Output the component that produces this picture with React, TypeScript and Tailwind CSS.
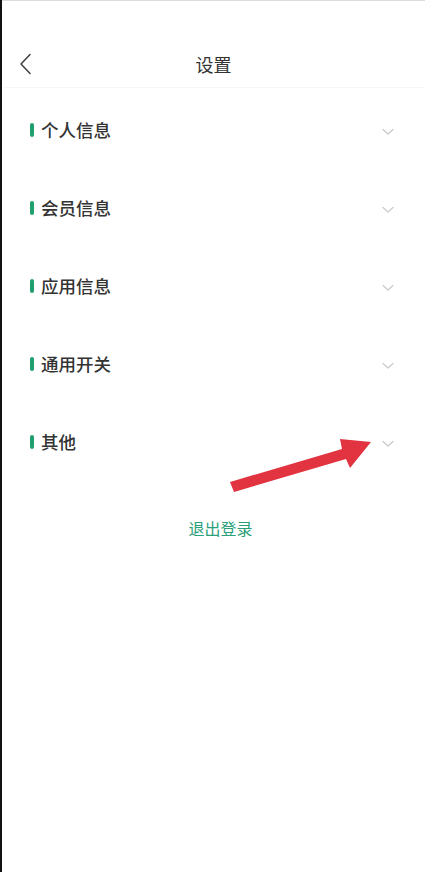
import React from 'react';

const items = ['个人信息', '会员信息', '应用信息', '通用开关', '其他'];

const Chevron = () => (
  <svg width="12" height="8" viewBox="0 0 12 8" fill="none" className="mt-[4px]">
    <path d="M1 1.5 L6 6 L11 1.5" stroke="#c9c9c9" strokeWidth="1.2" strokeLinecap="round" strokeLinejoin="round" />
  </svg>
);

export default function App() {
  return (
    <div
      className="relative flex min-h-[872px] w-[425px] bg-white"
      style={{ fontFamily: '"Noto Sans CJK SC", "Noto Sans", sans-serif' }}
    >
      {/* left dark edge */}
      <div className="w-[2px] shrink-0 bg-[#111]" />

      <div className="flex flex-1 flex-col">
        {/* Header */}
        <div className="h-[1px] bg-[#dcdcdc]" />
        <div className="h-[39px]" />
        <div className="relative flex h-[48px] items-center justify-center border-b border-[#f7f7f7]">
          <button className="absolute left-[16px] top-[13px] p-0">
            <svg width="14" height="22" viewBox="0 0 14 22" fill="none">
              <path d="M12 1.5 L3 11 L12 20.5" stroke="#444" strokeWidth="1.6" strokeLinecap="round" strokeLinejoin="round" />
            </svg>
          </button>
          <h1 className="text-[18px] leading-[24px] text-[#333]">设置</h1>
        </div>

        {/* Sections */}
        <div className="mt-[3px] flex flex-col">
          {items.map((label) => (
            <div key={label} className="flex h-[78px] items-center justify-between pl-[28px] pr-[31px]">
              <div className="flex items-center gap-[7px]">
                <span className="h-[14px] w-[4px] rounded-full bg-[#1fa06e]" />
                <span className="text-[17.5px] font-medium leading-[24px] text-[#333]">{label}</span>
              </div>
              <Chevron />
            </div>
          ))}
        </div>

        <div className="mt-[35px] flex justify-center pl-[14px]">
          <span className="text-[16px] leading-[24px] text-[#2a9f7a]">退出登录</span>
        </div>
      </div>

      {/* annotation arrow */}
      <svg className="absolute left-[228px] top-[430px]" width="150" height="68" viewBox="0 0 150 68">
        <path d="M2 52 L114 19 L112 9 L143 12 L122 38 L118 29 L6 62 Z" fill="#e13340" />
      </svg>
    </div>
  );
}
